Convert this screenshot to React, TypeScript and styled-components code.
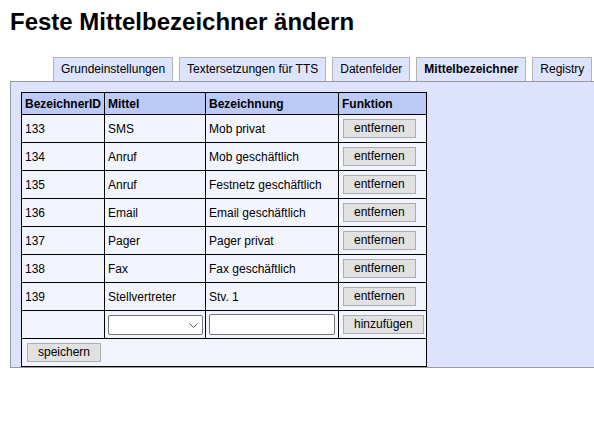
import React from "react";
import styled, { createGlobalStyle } from "styled-components";

const Global = createGlobalStyle`
  html, body { margin: 0; padding: 0; background: #ffffff; overflow: hidden; }
  body { font-family: "Liberation Sans", Arial, sans-serif; color: #000; }
`;

const Page = styled.div`
  padding: 8px 0 0 10px;
`;

const Title = styled.h1`
  margin: 0;
  font-size: 24px;
  font-weight: bold;
  line-height: 28px;
  font-family: "Liberation Sans", Arial, sans-serif;
`;

const TabBar = styled.div`
  display: flex;
  gap: 6px;
  margin: 21px 0 0 43px;
`;

const Tab = styled.div<{ $active?: boolean }>`
  height: 23px;
  line-height: 23px;
  padding: 0 7px;
  border: 1px solid #b4b4b4;
  border-bottom: none;
  background: #dde3fc;
  font-size: 12px;
  font-weight: ${(p) => (p.$active ? "bold" : "normal")};
  white-space: nowrap;
`;

const Panel = styled.div`
  margin-right: -12px;
  border: 1px solid #9a9a9a;
  border-right: none;
  background: #dde3fc;
  padding: 10px 0 0 10px;
`;

const Table = styled.table`
  border-collapse: collapse;
  table-layout: fixed;
  width: 405px;
  border: 1px solid #000;
  font-size: 12px;
`;

const Col = styled.col<{ $w: number }>`
  width: ${(p) => p.$w}px;
`;

const Th = styled.th`
  background: #bccaf8;
  border: 1px solid #000;
  padding: 3px 3px;
  height: 15px;
  text-align: left;
  font-weight: bold;
  white-space: nowrap;
  overflow: hidden;
`;

const Td = styled.td<{ $pad?: number }>`
  background: #f3f5fe;
  border: 1px solid #000;
  padding: 3px ${(p) => p.$pad ?? 3}px;
  height: 21px;
  vertical-align: middle;
  white-space: nowrap;
`;

const Button = styled.button`
  font-family: "Liberation Sans", Arial, sans-serif;
  font-size: 12px;
  line-height: 13px;
  padding: 2px 10px;
  margin: 0 0 0 1px;
  background: #e1e1e1;
  border: 1px solid #adadad;
  border-radius: 0;
  color: #000;
`;

const SelectWrap = styled.div`
  position: relative;
  width: 95px;
  height: 20px;
`;

const Select = styled.select`
  appearance: none;
  -webkit-appearance: none;
  box-sizing: border-box;
  width: 95px;
  height: 20px;
  margin: 0;
  padding: 0 16px 0 3px;
  border: 1px solid #767676;
  border-radius: 2px;
  font-family: "Liberation Sans", Arial, sans-serif;
  font-size: 12px;
  background: #fff;
`;

const Chevron = styled.svg`
  position: absolute;
  right: 5px;
  top: 8px;
  pointer-events: none;
`;

const Input = styled.input`
  box-sizing: border-box;
  width: 126px;
  height: 21px;
  margin: 0;
  padding: 1px 3px;
  border: 1px solid #767676;
  border-radius: 2px;
  font-family: "Liberation Sans", Arial, sans-serif;
  font-size: 12px;
  background: #fff;
`;

const tabs = [
  "Grundeinstellungen",
  "Textersetzungen für TTS",
  "Datenfelder",
  "Mittelbezeichner",
  "Registry",
];

const rows = [
  ["133", "SMS", "Mob privat"],
  ["134", "Anruf", "Mob geschäftlich"],
  ["135", "Anruf", "Festnetz geschäftlich"],
  ["136", "Email", "Email geschäftlich"],
  ["137", "Pager", "Pager privat"],
  ["138", "Fax", "Fax geschäftlich"],
  ["139", "Stellvertreter", "Stv. 1"],
];

export default function App() {
  return (
    <>
      <Global />
      <Page>
        <Title>Feste Mittelbezeichner ändern</Title>
        <TabBar>
          {tabs.map((t) => (
            <Tab key={t} $active={t === "Mittelbezeichner"}>
              {t}
            </Tab>
          ))}
        </TabBar>
        <Panel>
          <Table>
            <colgroup>
              <Col $w={83} />
              <Col $w={101} />
              <Col $w={133} />
              <Col $w={88} />
            </colgroup>
            <thead>
              <tr>
                <Th>BezeichnerID</Th>
                <Th>Mittel</Th>
                <Th>Bezeichnung</Th>
                <Th>Funktion</Th>
              </tr>
            </thead>
            <tbody>
              {rows.map((r) => (
                <tr key={r[0]}>
                  <Td>{r[0]}</Td>
                  <Td>{r[1]}</Td>
                  <Td>{r[2]}</Td>
                  <Td>
                    <Button type="button">entfernen</Button>
                  </Td>
                </tr>
              ))}
              <tr>
                <Td />
                <Td>
                  <SelectWrap>
                    <Select defaultValue="">
                      <option value=""></option>
                    </Select>
                    <Chevron width="9" height="5" viewBox="0 0 9 5">
                      <polyline
                        points="0.5,0.5 4.5,4.5 8.5,0.5"
                        fill="none"
                        stroke="#555"
                        strokeWidth="1"
                      />
                    </Chevron>
                  </SelectWrap>
                </Td>
                <Td>
                  <Input type="text" />
                </Td>
                <Td>
                  <Button type="button">hinzufügen</Button>
                </Td>
              </tr>
              <tr>
                <Td colSpan={4} $pad={4}>
                  <Button type="button">speichern</Button>
                </Td>
              </tr>
            </tbody>
          </Table>
        </Panel>
      </Page>
    </>
  );
}
